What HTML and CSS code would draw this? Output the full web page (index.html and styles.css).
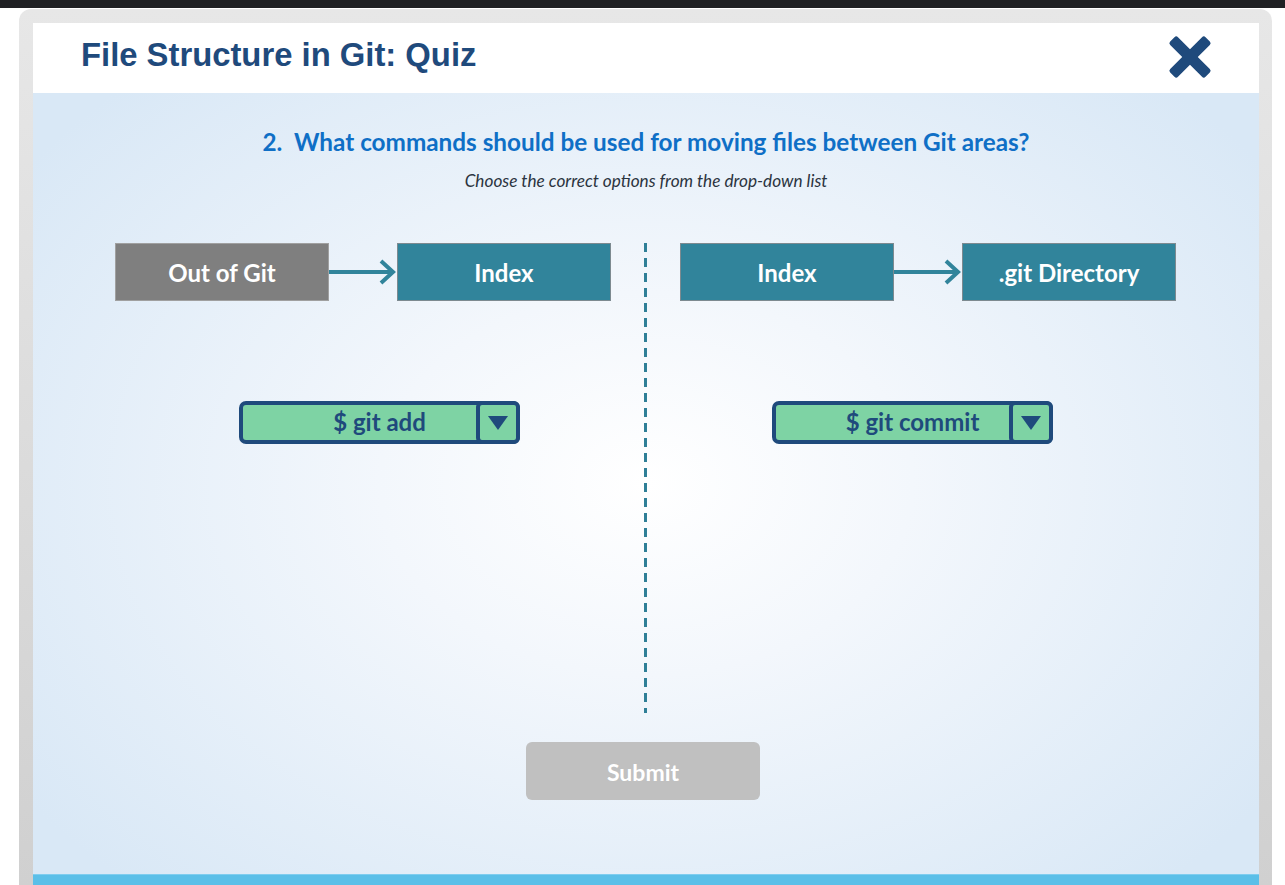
FILE: index.html
```html
<!DOCTYPE html>
<html lang="en">
<head>
<meta charset="utf-8">
<title>File Structure in Git: Quiz</title>
<link rel="stylesheet" href="styles.css">
</head>
<body>
<div class="topbar"></div>
<div class="frame">
  <header class="header">
    <h1 class="title">File Structure in Git: Quiz</h1>
    <button class="close" aria-label="Close">
      <svg width="44" height="44" viewBox="0 0 44 44">
        <rect x="-3" y="16.5" width="50" height="11" rx="2.5" fill="#1f4a7c" transform="rotate(45 22 22)"/>
        <rect x="-3" y="16.5" width="50" height="11" rx="2.5" fill="#1f4a7c" transform="rotate(-45 22 22)"/>
      </svg>
    </button>
  </header>
  <main class="content">
    <h2 class="question">2.&nbsp; What commands should be used for moving files between Git areas?</h2>
    <p class="hint">Choose the correct options from the drop-down list</p>
    <div class="diagram">
      <section class="column">
        <div class="flow">
          <div class="box box-gray">Out of Git</div>
          <svg class="arrow" width="68" height="58" viewBox="0 0 68 58">
            <line x1="0" y1="29" x2="64" y2="29" stroke="#31849b" stroke-width="4"/>
            <polyline points="52,18 64,29 52,40" fill="none" stroke="#31849b" stroke-width="4" stroke-linejoin="miter"/>
          </svg>
          <div class="box box-teal">Index</div>
        </div>
        <div class="select select-left">
          <span class="select-value">$ git add</span>
          <span class="select-btn"><svg width="22" height="16" viewBox="0 0 22 16"><polygon points="1,1 21,1 11,15" fill="#1f4a7c"/></svg></span>
        </div>
      </section>
      <div class="divider"><div class="dash"></div></div>
      <section class="column">
        <div class="flow">
          <div class="box box-teal">Index</div>
          <svg class="arrow" width="68" height="58" viewBox="0 0 68 58">
            <line x1="0" y1="29" x2="64" y2="29" stroke="#31849b" stroke-width="4"/>
            <polyline points="52,18 64,29 52,40" fill="none" stroke="#31849b" stroke-width="4" stroke-linejoin="miter"/>
          </svg>
          <div class="box box-teal">.git Directory</div>
        </div>
        <div class="select select-right">
          <span class="select-value">$ git commit</span>
          <span class="select-btn"><svg width="22" height="16" viewBox="0 0 22 16"><polygon points="1,1 21,1 11,15" fill="#1f4a7c"/></svg></span>
        </div>
      </section>
    </div>
    <div class="actions">
      <button class="submit">Submit</button>
    </div>
  </main>
  <div class="footer-bar"></div>
</div>
</body>
</html>
```

FILE: styles.css
```css
html, body {
  margin: 0;
  padding: 0;
  background: #ffffff;
  overflow: hidden;
  height: 885px;
}

.topbar {
  height: 8px;
  background: #202124;
}

.frame {
  margin: 1px 13px 0 19px;
  padding: 14px 13px 0 14px;
  border-radius: 12px 12px 0 0;
  background: linear-gradient(#e7e7e7, #d0d0d0);
  height: 876px;
  box-sizing: border-box;
  display: flex;
  flex-direction: column;
}

.header {
  height: 70px;
  flex: none;
  background: #ffffff;
  display: flex;
  align-items: center;
  justify-content: space-between;
  padding: 0 47px 0 48px;
}

.title {
  margin: 0;
  font-family: "Liberation Sans", Arial, sans-serif;
  font-weight: bold;
  font-size: 32.8px;
  color: #1f4a7c;
  letter-spacing: 0;
  padding-bottom: 6px;
}

.close {
  border: 0;
  background: none;
  padding: 0;
  width: 44px;
  height: 44px;
  display: flex;
  margin-bottom: 3px;
}

.content {
  height: 781px;
  flex: none;
  background: radial-gradient(ellipse 62% 70% at 50% 50%, #ffffff 0%, #f3f7fc 35%, #d9e8f6 100%);
  padding-top: 34px;
  box-sizing: border-box;
  font-family: Lato, "Open Sans", sans-serif;
}

.question {
  margin: 0;
  text-align: center;
  font-size: 24.3px;
  line-height: 30px;
  font-weight: bold;
  color: #0f6fc6;
  white-space: pre;
}

.hint {
  margin: 14px 0 0;
  text-align: center;
  font-style: italic;
  font-size: 17.2px;
  line-height: 20px;
  color: #2b3440;
}

.diagram {
  margin-top: 52px;
  display: flex;
  padding-left: 82px;
}

.column {
  width: 496px;
  display: flex;
  flex-direction: column;
}

.flow {
  display: flex;
  align-items: center;
}

.box {
  width: 214px;
  height: 58px;
  box-sizing: border-box;
  display: flex;
  align-items: center;
  justify-content: center;
  color: #ffffff;
  font-weight: bold;
  font-size: 24px;
}

.box-gray {
  background: #7f7f7f;
  border: 1px solid #a0a0a0;
}

.box-teal {
  background: #31849b;
  border: 1px solid #7d8a90;
}

.arrow {
  flex: none;
  display: block;
}

.select {
  margin-top: 100px;
  width: 281px;
  height: 43px;
  box-sizing: border-box;
  border: 4px solid #1f4a7c;
  border-radius: 7px;
  background: #7ed3a4;
  position: relative;
  display: flex;
  align-items: center;
  justify-content: center;
}

.select-left { margin-left: 124px; }
.select-right { margin-left: 92px; }

.select-value {
  font-weight: bold;
  font-size: 24px;
  color: #1f4a7c;
  line-height: 1;
  padding-bottom: 1px;
}

.select-btn {
  position: absolute;
  right: -4px;
  top: -4px;
  width: 44px;
  height: 43px;
  box-sizing: border-box;
  border: 4px solid #1f4a7c;
  border-radius: 6px;
  background: #7ed3a4;
  display: flex;
  align-items: center;
  justify-content: center;
}

.select-btn svg { display: block; margin-top: 1px; }

.divider {
  width: 68px;
  display: flex;
  justify-content: center;
  padding-right: 1px;
}

.dash {
  width: 3px;
  height: 470px;
  background: repeating-linear-gradient(to bottom, #2f7f97 0, #2f7f97 9px, transparent 9px, transparent 15px);
}

.actions {
  margin-top: 29px;
  padding-left: 493px;
}

.submit {
  width: 234px;
  height: 58px;
  border: 0;
  border-radius: 6px;
  background: #c0c0c0;
  color: #ffffff;
  font-family: Lato, "Open Sans", sans-serif;
  font-weight: bold;
  font-size: 23px;
  padding: 2px 0 0;
}

.footer-bar {
  height: 12px;
  flex: none;
  background: #5bbfe8;
  border-top: 1px solid #7fcdef;
}
```
